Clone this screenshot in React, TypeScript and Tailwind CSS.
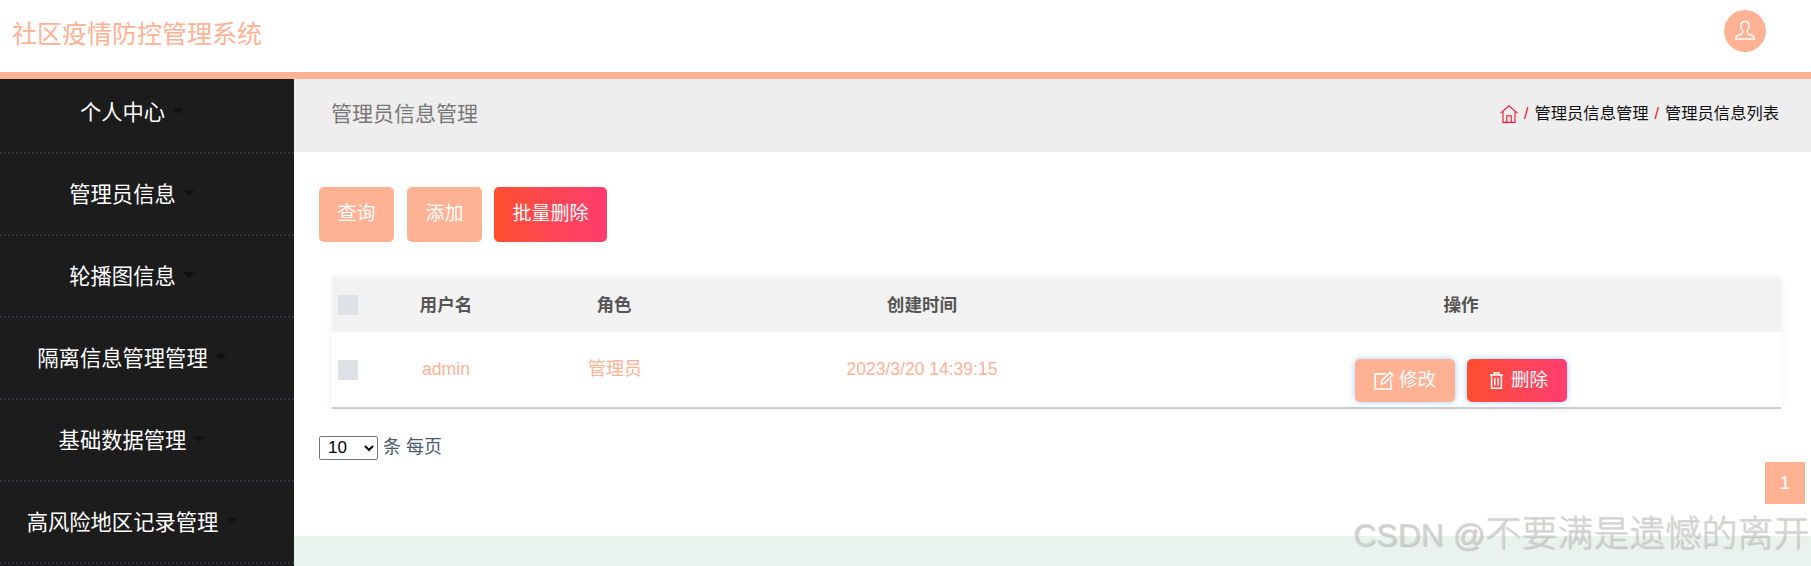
const FONT = "font-['Liberation_Sans','Noto_Sans_CJK_SC',sans-serif]";

const menus = [
  "个人中心",
  "管理员信息",
  "轮播图信息",
  "隔离信息管理管理",
  "基础数据管理",
  "高风险地区记录管理",
];

function UserIcon() {
  return (
    <svg width="22" height="22" viewBox="0 0 22 22" fill="none" stroke="#fff" strokeWidth="1.4">
      <path d="M11 1.5c-2.7 0-4.2 2-4.2 4.6 0 2 .8 3.7 1.9 4.7v1.7c0 .8-.5 1.2-1.3 1.5l-3.3 1.4c-1.4.6-2.3 1.8-2.4 3.6h18.6c-.1-1.8-1-3-2.4-3.6L14.6 14c-.8-.3-1.3-.7-1.3-1.5v-1.7c1.1-1 1.9-2.7 1.9-4.7 0-2.6-1.5-4.6-4.2-4.6z" />
    </svg>
  );
}

function HomeIcon() {
  return (
    <svg width="18" height="18" viewBox="0 0 18 18" fill="none" stroke="#f0142f" strokeWidth="1.1">
      <path d="M.6 8.2 9 .8l8.4 7.4" />
      <path d="M3 6.6v10.8h12V6.6" />
      <path d="M6.8 17.4v-6.6h4.4v6.6" />
    </svg>
  );
}

function EditIcon() {
  return (
    <svg width="20" height="19" viewBox="0 0 19 18" fill="none" stroke="#fff" strokeWidth="1.5">
      <path d="M11 2.7H1v14.3h15V8" />
      <path d="M6.7 12.3l.7-3.2L15.2 1.3l2.5 2.5-7.8 7.8z" />
    </svg>
  );
}

function TrashIcon() {
  return (
    <svg width="13" height="17" viewBox="0 0 13 17" fill="none" stroke="#fff" strokeWidth="1.5">
      <path d="M0 3h13M4.3 3V.8h4.4V3" />
      <path d="M1.6 3v13.2h9.8V3" />
      <path d="M4.8 6v7.5M8.2 6v7.5" />
    </svg>
  );
}

export default function App() {
  return (
    <div className={`relative h-[566px] w-[1811px] overflow-hidden bg-white ${FONT}`}>
      <header className="flex h-[79px] items-start justify-between border-b-[7px] border-[#ffb194] bg-white pl-[12px] pr-[45px]">
        <h1 className="mt-[15px] text-[25px] leading-[38px] text-[#ffb194]">社区疫情防控管理系统</h1>
        <div className="mt-[10px] flex h-[42px] w-[42px] items-center justify-center rounded-full bg-[#ffb194]">
          <UserIcon />
        </div>
      </header>

      <div className="flex h-[487px]">
        <aside className="w-[294px] shrink-0 bg-[#1c1c1c]">
          {menus.map((name, i) => (
            <div
              key={name}
              className={`flex w-full items-center border-b-2 border-dotted border-[#2f3040] ${
                i === 0 ? "h-[75px] pb-[5px]" : "h-[82px] pt-[2px]"
              }`}
            >
              <div className="w-[245px] text-center">
                <span className="relative inline-block text-[21.3px] leading-[30px] text-white">
                  {name}
                  <span className="absolute left-full top-[10px] ml-[7px] h-0 w-0 border-x-[6px] border-t-[6px] border-x-transparent border-t-[#111111]" />
                </span>
              </div>
            </div>
          ))}
        </aside>

        <main className="flex min-w-0 flex-1 flex-col">
          <div className="flex h-[73px] shrink-0 items-center justify-between bg-[#eeeeee] pb-[4px] pl-[37px] pr-[32px]">
            <span className="text-[21px] text-[#787878]">管理员信息管理</span>
            <div className="flex items-center text-[16.3px] text-[#111]">
              <HomeIcon />
              <span className="mx-[6px] text-[#f0142f]">/</span>
              <span className="whitespace-nowrap">管理员信息管理</span>
              <span className="mx-[6px] text-[#f0142f]">/</span>
              <span>管理员信息列表</span>
            </div>
          </div>

          <div className="relative flex-1 pl-[25px] pr-[6px]">
            <div className="mt-[35px] flex">
              <button className="mr-[13px] flex h-[55px] w-[75px] items-center justify-center rounded-[5px] bg-[#ffb194] text-[19px] text-white">
                查询
              </button>
              <button className="mr-[12px] flex h-[55px] w-[75px] items-center justify-center rounded-[5px] bg-[#ffb194] text-[19px] text-white">
                添加
              </button>
              <button className="flex h-[55px] w-[113px] items-center justify-center rounded-[5px] bg-gradient-to-r from-[#ff4d2b] to-[#ff3d6e] text-[19px] text-white">
                批量删除
              </button>
            </div>

            <table className="ml-[13px] mt-[35px] w-[1449px] table-fixed border-b-2 border-[#cccccc] shadow-[0_0_8px_rgba(0,0,0,0.06)]">
              <thead>
                <tr className="h-[55px] bg-[#f2f2f2] text-[17.6px] font-bold text-[#555555]">
                  <th className="w-[32px] pl-[6px]">
                    <div className="h-[20px] w-[20px] bg-[#dee2e6]" />
                  </th>
                  <th className="w-[164px] pt-[1px]">用户名</th>
                  <th className="w-[172px] pt-[1px]">角色</th>
                  <th className="w-[444px] pt-[1px]">创建时间</th>
                  <th className="pr-[3px] pt-[1px]">操作</th>
                </tr>
              </thead>
              <tbody>
                <tr className="h-[76px] bg-white text-center text-[18px] text-[#ffb194]">
                  <td className="pl-[6px]">
                    <div className="h-[20px] w-[20px] bg-[#dee2e6]" />
                  </td>
                  <td className="pb-[1px] text-[17.6px]">admin</td>
                  <td className="pb-[1px] pl-[2px]">管理员</td>
                  <td className="pb-[1px] text-[17.5px]">2023/3/20 14:39:15</td>
                  <td className="pr-[3px]">
                    <div className="flex justify-center gap-[12px] pt-[21px]">
                      <button className="flex h-[43px] w-[100px] items-center justify-center gap-[5px] rounded-[5px] bg-[#ffb194] text-[18.5px] text-white shadow-[0_0_6px_#9fcbff]">
                        <EditIcon />
                        修改
                      </button>
                      <button className="flex h-[43px] w-[100px] items-center justify-center gap-[8px] rounded-[5px] bg-gradient-to-r from-[#ff4d2b] to-[#ff3d6e] pl-[4px] text-[18.5px] text-white shadow-[0_0_6px_#9fcbff]">
                        <TrashIcon />
                        删除
                      </button>
                    </div>
                  </td>
                </tr>
              </tbody>
            </table>

            <div className="mt-[25px] flex items-center">
              <select className="h-[24px] w-[59px] rounded-[2px] border border-[#767676] bg-white pl-[4px] text-[17px] text-black">
                <option>10</option>
              </select>
              <span className="ml-[5px] text-[18px] text-[#4a5a6b]">条 每页</span>
            </div>

            <div className="mt-px flex justify-end">
              <span className="flex h-[42px] w-[40px] items-center justify-center bg-[#ffb194] text-[18px] text-white">
                1
              </span>
            </div>
          </div>

          <footer className="h-[30px] shrink-0 bg-[#e7f3ec]" />
        </main>
      </div>

      <div className="absolute left-[1353px] top-[510px] flex items-baseline whitespace-nowrap font-light leading-[48px] text-[#d2d2d2]/85 [text-shadow:1px_1px_1px_rgba(0,0,0,0.2)]">
        <span className="text-[32px]">CSDN @</span>
        <span className="text-[36px]">不要满是遗憾的离开</span>
      </div>
    </div>
  );
}
